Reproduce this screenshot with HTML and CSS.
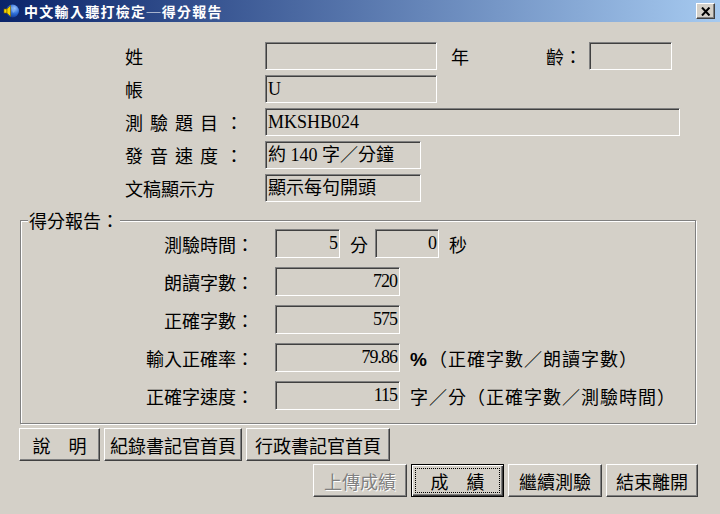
FILE: index.html
```html
<!DOCTYPE html>
<html lang="zh-TW">
<head>
  <meta charset="UTF-8">
  <title>中文輸入聽打檢定─得分報告</title>
  <link rel="stylesheet" href="styles.css">
</head>
<body>
  <div class="window">
    <div class="titlebar">
      <svg class="app-icon" width="16" height="16" viewBox="0 0 16 16">
        <defs>
          <radialGradient id="globe" cx="0.65" cy="0.3" r="0.8">
            <stop offset="0" stop-color="#9cc4ff"/>
            <stop offset="0.5" stop-color="#2f6fd8"/>
            <stop offset="1" stop-color="#0b2f8a"/>
          </radialGradient>
        </defs>
        <circle cx="9.5" cy="8" r="6.5" fill="url(#globe)"/>
        <path d="M8 4 L11 5 L12 8 L10 10 L9 7 Z" fill="#7fb0f0" opacity="0.7"/>
        <rect x="1" y="6" width="3" height="4" fill="#f5d400" stroke="#7a6000" stroke-width="0.6"/>
        <path d="M4 6 L7.5 2.5 L7.5 13.5 L4 10 Z" fill="#f5d400" stroke="#7a6000" stroke-width="0.6"/>
      </svg>
      <span class="title">中文輸入聽打檢定─得分報告</span>
      <button class="close" type="button">
        <svg width="10" height="9" viewBox="0 0 10 9">
          <path d="M1 0.5 L8.5 8.5 M8.5 0.5 L1 8.5" stroke="#000" stroke-width="2"/>
        </svg>
      </button>
    </div>

    <div class="info">
      <div class="row">
        <span class="lbl">姓</span>
        <span class="field w172"></span>
        <span class="year">年</span>
        <span class="age">齡：</span>
        <span class="field w83"></span>
      </div>
      <div class="row">
        <span class="lbl">帳</span>
        <span class="field w172">U</span>
      </div>
      <div class="row">
        <span class="lbl spaced">測驗題目：</span>
        <span class="field w415">MKSHB024</span>
      </div>
      <div class="row">
        <span class="lbl spaced">發音速度：</span>
        <span class="field w156">約 140 字／分鐘</span>
      </div>
      <div class="row">
        <span class="lbl">文稿顯示方</span>
        <span class="field w156">顯示每句開頭</span>
      </div>
    </div>

    <fieldset class="report">
      <legend>得分報告：</legend>
      <div class="report-rows">
        <div class="rrow">
          <span class="rlbl">測驗時間：</span>
          <span class="num w65">5</span>
          <span class="unit">分</span>
          <span class="num w64">0</span>
          <span class="unit">秒</span>
        </div>
        <div class="rrow">
          <span class="rlbl">朗讀字數：</span>
          <span class="num">720</span>
        </div>
        <div class="rrow">
          <span class="rlbl">正確字數：</span>
          <span class="num">575</span>
        </div>
        <div class="rrow">
          <span class="rlbl">輸入正確率：</span>
          <span class="num">79.86</span>
          <span class="unit long"><b class="pct">%</b>（正確字數／朗讀字數）</span>
        </div>
        <div class="rrow">
          <span class="rlbl">正確字速度：</span>
          <span class="num">115</span>
          <span class="unit long">字／分（正確字數／測驗時間）</span>
        </div>
      </div>
    </fieldset>

    <div class="btns left">
      <button type="button" class="btn b81">說　明</button>
      <button type="button" class="btn b138">紀錄書記官首頁</button>
      <button type="button" class="btn b144">行政書記官首頁</button>
    </div>
    <div class="btns right">
      <button type="button" class="btn b94" disabled>上傳成績</button>
      <button type="button" class="btn b93 default"><span class="focus">成　績</span></button>
      <button type="button" class="btn b94">繼續測驗</button>
      <button type="button" class="btn b92">結束離開</button>
    </div>
  </div>
</body>
</html>
```

FILE: styles.css
```css
body {
  margin: 0;
  background: #d4d0c8;
  font-family: "Noto Sans CJK TC", sans-serif;
  font-size: 18px;
  color: #000;
}
.window {
  width: 720px;
  height: 514px;
  overflow: hidden;
}

/* title bar */
.titlebar {
  height: 22px;
  display: flex;
  align-items: center;
  padding: 0 5px 0 3px;
  background: linear-gradient(to right, #0a246a, #a6caf0);
}
.app-icon {
  flex: none;
}
.title {
  margin-left: 5px;
  color: #fff;
  font-size: 14px;
  font-weight: bold;
  letter-spacing: 1.3px;
  line-height: 22px;
}
.close {
  margin-left: auto;
  width: 19px;
  height: 16px;
  padding: 0;
  display: flex;
  align-items: center;
  justify-content: center;
  background: #d4d0c8;
  border: 1px solid;
  border-color: #fff #404040 #404040 #fff;
  box-shadow: inset -1px -1px #808080;
}

/* top info */
.info {
  padding: 20px 0 0 125px;
  display: flex;
  flex-direction: column;
  gap: 5px;
}
.row {
  display: flex;
  align-items: center;
  height: 28px;
}
.lbl {
  width: 140px;
  line-height: 28px;
}
.lbl.spaced {
  letter-spacing: 7px;
}
.year {
  margin-left: 14px;
}
.age {
  margin-left: 77px;
}
.field {
  height: 28px;
  box-sizing: border-box;
  border: 1px solid;
  border-color: #808080 #fff #fff #808080;
  box-shadow: inset 1px 1px #404040;
  padding-left: 2px;
  font-family: "Liberation Serif", "Noto Sans CJK TC", serif;
  font-size: 18px;
  line-height: 26px;
  white-space: nowrap;
}
.age + .field {
  margin-left: 7px;
}
.w172 { width: 172px; }
.w83 { width: 83px; }
.w415 { width: 415px; }
.w156 { width: 156px; }

/* score group */
.report {
  margin: 10px 0 0 20px;
  width: 676px;
  box-sizing: border-box;
  padding: 0 0 13px 0;
  border: 1px solid #808080;
  box-shadow: inset 1px 1px #fff, 1px 1px #fff;
}
.report legend {
  margin-left: 7px;
  padding: 0 1px;
  font-size: 18px;
  line-height: 17px;
  background: #d4d0c8;
}
.report-rows {
  display: flex;
  flex-direction: column;
  gap: 9px;
}
.rrow {
  display: flex;
  align-items: center;
  height: 29px;
}
.rlbl {
  width: 233px;
  margin-right: 21px;
  text-align: right;
}
.num {
  width: 125px;
  height: 29px;
  box-sizing: border-box;
  border: 1px solid;
  border-color: #808080 #fff #fff #808080;
  box-shadow: inset 1px 1px #404040;
  padding-right: 2px;
  text-align: right;
  font-family: "Liberation Serif", serif;
  font-size: 18px;
  letter-spacing: -1px;
  line-height: 27px;
}
.num.w65 { width: 65px; }
.num.w64 { width: 64px; }
.unit {
  margin: 0 7px 0 10px;
  white-space: nowrap;
}
.unit.long {
  letter-spacing: 1px;
}
.pct {
  display: inline-block;
  width: 19px;
  font-family: "Liberation Sans", sans-serif;
  font-size: 19px;
  font-weight: bold;
  letter-spacing: 0;
}

/* buttons */
.btns {
  display: flex;
  gap: 4px;
  height: 33px;
}
.btns.left {
  margin-top: 4px;
  padding-left: 19px;
}
.btns.right {
  margin-top: 3px;
  justify-content: flex-end;
  padding-right: 22px;
}
.btn {
  height: 33px;
  box-sizing: border-box;
  padding: 0;
  background: #d4d0c8;
  border: 1px solid;
  border-color: #fff #404040 #404040 #fff;
  box-shadow: inset -1px -1px #808080;
  font-family: "Noto Sans CJK TC", sans-serif;
  font-size: 18px;
  color: #000;
  white-space: nowrap;
}
.btn:disabled {
  color: #808080;
  text-shadow: 1px 1px #fff;
}
.btn.default {
  display: flex;
  border: 1px solid #000;
  box-shadow: inset 1px 1px #fff, inset -1px -1px #404040, inset -2px -2px #808080;
}
.focus {
  flex: 1;
  margin: 3px;
  border: 1px dotted #000;
  display: flex;
  align-items: center;
  justify-content: center;
}
.b81 { width: 81px; }
.b138 { width: 138px; }
.b144 { width: 144px; }
.b92 { width: 92px; }
.b93 { width: 93px; }
.b94 { width: 94px; }
```
